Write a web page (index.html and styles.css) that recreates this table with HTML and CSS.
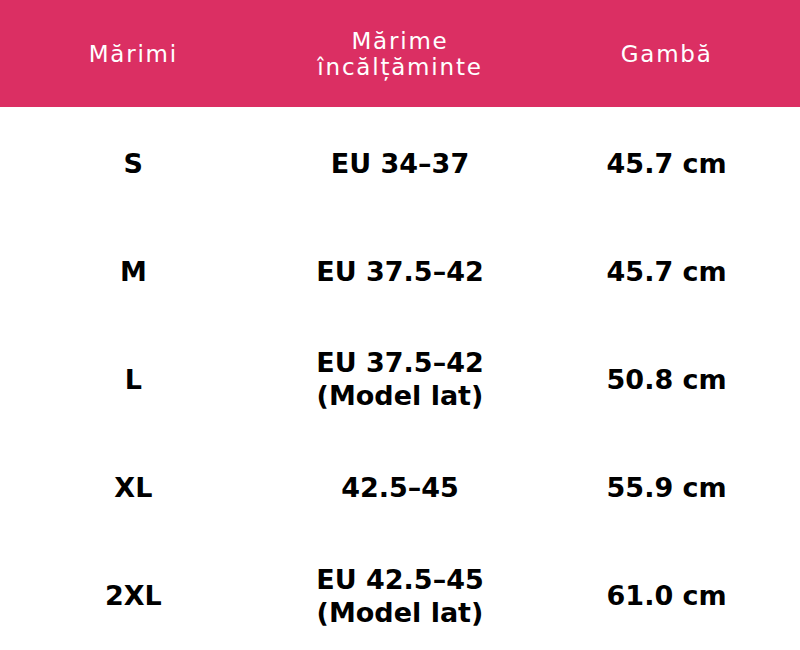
FILE: index.html
```html
<!DOCTYPE html>
<html lang="ro">
<head>
<meta charset="utf-8">
<link rel="stylesheet" href="styles.css">
</head>
<body>
<div class="table">
  <div class="head">
    <div class="hcell">Mărimi</div>
    <div class="hcell">Mărime<br>încălțăminte</div>
    <div class="hcell">Gambă</div>
  </div>
  <div class="body">
    <div class="row"><div class="cell">S</div><div class="cell">EU 34–37</div><div class="cell">45.7 cm</div></div>
    <div class="row"><div class="cell">M</div><div class="cell">EU 37.5–42</div><div class="cell">45.7 cm</div></div>
    <div class="row"><div class="cell">L</div><div class="cell">EU 37.5–42<br>(Model lat)</div><div class="cell">50.8 cm</div></div>
    <div class="row"><div class="cell">XL</div><div class="cell">42.5–45</div><div class="cell">55.9 cm</div></div>
    <div class="row"><div class="cell">2XL</div><div class="cell">EU 42.5–45<br>(Model lat)</div><div class="cell">61.0 cm</div></div>
  </div>
</div>
</body>
</html>
```
FILE: styles.css
```css
html, body {
  margin: 0;
  padding: 0;
  background: #ffffff;
}
.table {
  width: 800px;
  height: 650px;
  display: flex;
  flex-direction: column;
  font-family: "DejaVu Sans", sans-serif;
}
.head {
  height: 107px;
  background: #db2f63;
  display: grid;
  grid-template-columns: 1fr 1fr 1fr;
  align-items: center;
}
.hcell {
  color: #ffffff;
  font-size: 23px;
  font-weight: 400;
  letter-spacing: 1.8px;
  line-height: 26px;
  text-align: center;
}
.body {
  flex: 1;
  display: grid;
  grid-template-rows: repeat(5, 1fr);
  padding-top: 2px;
}
.row {
  display: grid;
  grid-template-columns: 1fr 1fr 1fr;
  align-items: center;
}
.cell {
  color: #000000;
  font-size: 27px;
  font-weight: 700;
  line-height: 33px;
  text-align: center;
}
```
